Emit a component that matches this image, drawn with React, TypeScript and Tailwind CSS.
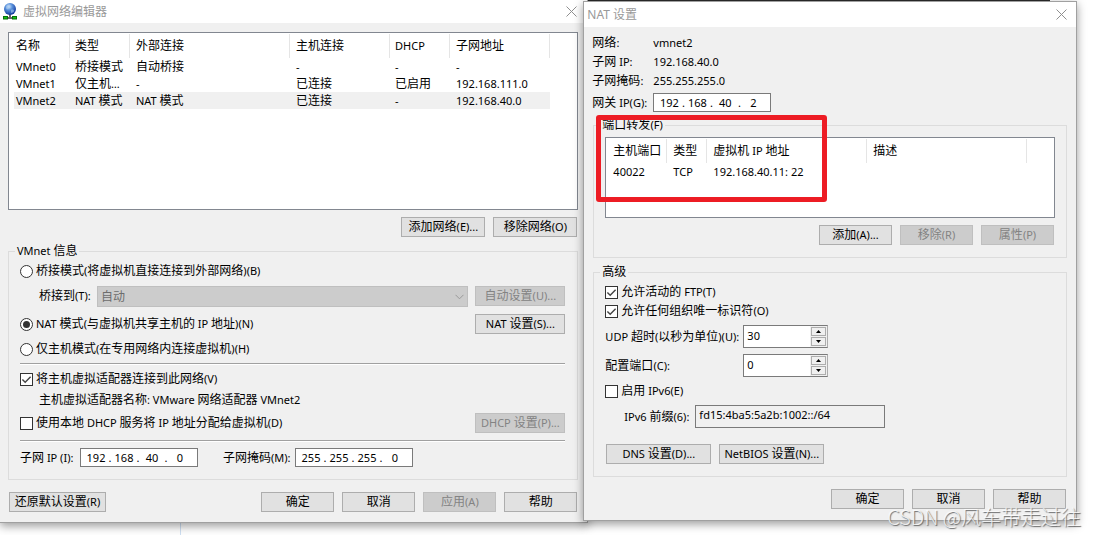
import type { ReactNode } from "react";
import { clsx } from "clsx";

// Latin runs are set one pixel smaller than the Chinese text around them
const Mixed = ({ text }: { text: string }) => (
  <>
    {text.split(/([\u4e00-\u9fff]+)/).map((part, i) =>
      i % 2 === 1 ? (
        part
      ) : (
        <span key={i} className="text-[11px]">
          {part}
        </span>
      )
    )}
  </>
);

const Button = ({ text, width, disabled }: { text: string; width: string; disabled?: boolean }) => (
  <button
    type="button"
    disabled={disabled}
    className={clsx(
      "h-5 shrink-0 border leading-4 text-center whitespace-nowrap",
      width,
      disabled ? "bg-[#cccccc] border-[#bfbfbf] text-[#838383]" : "bg-[#e1e1e1] border-[#adadad]"
    )}
  >
    <Mixed text={text} />
  </button>
);

const CloseButton = () => (
  <button type="button" aria-label="关闭" className="grid size-4 place-items-center">
    <svg width="11" height="11" viewBox="0 0 11 11" stroke="#8f8f8f" strokeWidth="1">
      <path d="M.5 .5l10 10M10.5 .5l-10 10" />
    </svg>
  </button>
);

const Check = ({ text, checked }: { text: string; checked?: boolean }) => (
  <label className="flex items-center gap-[3px] leading-4 whitespace-nowrap">
    <span className="grid">
      <input
        type="checkbox"
        defaultChecked={checked}
        className="peer col-start-1 row-start-1 size-[13px] appearance-none border border-[#333] bg-white"
      />
      <svg
        viewBox="0 0 13 13"
        className="pointer-events-none col-start-1 row-start-1 hidden size-[13px] peer-checked:block"
        fill="none"
        stroke="#444"
        strokeWidth="1.4"
      >
        <path d="M2.4 6.4l2.8 2.9 5.4-5.6" />
      </svg>
    </span>
    <span>
      <Mixed text={text} />
    </span>
  </label>
);

const Radio = ({ text, checked }: { text: string; checked?: boolean }) => (
  <label className="flex items-center gap-[3px] leading-4 whitespace-nowrap">
    <span className="grid">
      <input
        type="radio"
        name="vmnet-mode"
        defaultChecked={checked}
        className="peer col-start-1 row-start-1 size-[13px] appearance-none rounded-full border border-[#333] bg-white"
      />
      <span className="pointer-events-none col-start-1 row-start-1 hidden size-[7px] place-self-center rounded-full bg-[#333] peer-checked:block" />
    </span>
    <span>
      <Mixed text={text} />
    </span>
  </label>
);

const IpField = ({ label, parts }: { label: string; parts: string[] }) => (
  <div
    role="group"
    aria-label={label}
    className="flex h-[19px] w-[118px] items-center border border-[#7a7a7a] bg-white pl-[3px] text-[11px]"
  >
    {parts.map((part, i) => (
      <div key={i} className="flex items-center">
        {i > 0 && <span className="w-1 text-center leading-4">.</span>}
        <input
          type="text"
          aria-label={`${label} ${i + 1}`}
          defaultValue={part}
          className="h-4 w-6 bg-transparent text-center leading-4 outline-none"
        />
      </div>
    ))}
  </div>
);

const Spinner = ({ id, value }: { id: string; value: string }) => (
  <div className="flex h-[23px] w-[85px] border border-[#7a7a7a] border-r-[#adadad] bg-white">
    <input
      id={id}
      type="text"
      inputMode="numeric"
      defaultValue={value}
      className="h-[18px] min-w-0 flex-1 bg-transparent pl-[3px] text-[11px] leading-4 outline-none"
    />
    <div className="flex w-[17px] flex-col gap-px bg-[#f0f0f0] p-px">
      <button type="button" aria-label="增加" className="grid flex-1 place-items-center border border-[#adadad]">
        <svg width="5" height="3" viewBox="0 0 5 3">
          <path d="M0 3L2.5 0 5 3z" />
        </svg>
      </button>
      <button type="button" aria-label="减少" className="grid flex-1 place-items-center border border-[#adadad]">
        <svg width="5" height="3" viewBox="0 0 5 3">
          <path d="M0 0L2.5 3 5 0z" />
        </svg>
      </button>
    </div>
  </div>
);

const Group = ({ title, className, children }: { title: string; className?: string; children: ReactNode }) => (
  <fieldset className={clsx("min-w-0 border border-[#dcdcdc] px-[6px]", className)}>
    <legend className="h-[14px] px-[2px] leading-[14px]">
      <Mixed text={title} />
    </legend>
    {children}
  </fieldset>
);

const Divider = () => <hr className="h-[2px] border-t border-b border-t-[#a0a0a0] border-b-white" />;

type Column = { title: string; width: string };

const hostColumns: Column[] = [
  { title: "名称", width: "w-14 pl-[2px]" },
  { title: "类型", width: "w-[60px] pl-[5px]" },
  { title: "外部连接", width: "w-[160px] pl-[6px]" },
  { title: "主机连接", width: "w-[100px] pl-[6px]" },
  { title: "DHCP", width: "w-[60px] pl-[5px]" },
  { title: "子网地址", width: "w-[100px] pl-[6px]" },
];

const hostRows = [
  ["VMnet0", "桥接模式", "自动桥接", "-", "-", "-"],
  ["VMnet1", "仅主机…", "-", "已连接", "已启用", "192.168.111.0"],
  ["VMnet2", "NAT 模式", "NAT 模式", "已连接", "-", "192.168.40.0"],
];

const portColumns: Column[] = [
  { title: "主机端口", width: "w-14 pl-[2px]" },
  { title: "类型", width: "w-10 pl-[6px]" },
  { title: "虚拟机 IP 地址", width: "w-[160px] pl-[6px]" },
  { title: "描述", width: "w-[160px] pl-[6px]" },
];

const portRows = [["40022", "TCP", "192.168.40.11: 22", ""]];

const ListView = ({
  columns,
  rows,
  selected,
  height,
}: {
  columns: Column[];
  rows: string[][];
  selected?: number;
  height: string;
}) => (
  <div className={clsx("overflow-hidden border border-[#828790] bg-white pt-px pl-[5px]", height)}>
    <table className="table-fixed border-separate border-spacing-0 text-left whitespace-nowrap">
      <thead>
        <tr className="h-6">
          {columns.map((col) => (
            <th key={col.title} className={clsx("border-r border-[#e5e5e5] p-0 leading-4 font-normal", col.width)}>
              <Mixed text={col.title} />
            </th>
          ))}
        </tr>
      </thead>
      <tbody>
        {rows.map((row, r) => (
          <tr key={r} className={clsx("h-[17px]", r === selected && "bg-[#f0f0f0]")}>
            {row.map((cell, c) => (
              <td key={c} className={clsx("p-0 leading-4", columns[c].width)}>
                <Mixed text={cell} />
              </td>
            ))}
          </tr>
        ))}
      </tbody>
    </table>
  </div>
);

const NetworkIcon = () => (
  <svg width="15" height="17" viewBox="0 0 15 17">
    <defs>
      <radialGradient id="globe" cx="0.4" cy="0.3" r="0.7">
        <stop offset="0" stopColor="#d4e6fb" />
        <stop offset="0.4" stopColor="#5b93dc" />
        <stop offset="1" stopColor="#12389c" />
      </radialGradient>
    </defs>
    <rect x="0.5" y="13.5" width="4" height="2.5" fill="#12c212" stroke="#0a6d0a" />
    <rect x="9.5" y="13.5" width="4" height="2.5" fill="#12c212" stroke="#0a6d0a" />
    <path d="M7 11v3M5 15h4" stroke="#666" strokeWidth="2" />
    <circle cx="7" cy="6" r="6" fill="url(#globe)" />
    <path d="M3 4c1-2 3-2 4-1s-1 2-2 3-2 0-2-2zM8 7c2-1 3 0 3 1s-2 2-3 2z" fill="#a9c9ef" opacity=".6" />
  </svg>
);

const EditorWindow = () => (
  <section className="min-w-0 flex-[589_1_0%] border-r border-b border-[#a0a0a0] bg-[#f0f0f0] shadow-[0_3px_9px_rgba(0,0,0,0.4)]">
    <header className="flex h-[23px] items-center bg-white pr-2 pl-[3px]">
      <NetworkIcon />
      <h1 className="ml-[5px] flex-1 leading-4 text-[#999]">虚拟网络编辑器</h1>
      <CloseButton />
    </header>

    <div className="pt-[9px] pr-[9px] pb-[10px] pl-2">
      <ListView columns={hostColumns} rows={hostRows} selected={2} height="h-[178px]" />
      <div className="mt-[7px] flex justify-end gap-2 pr-px">
        <Button text="添加网络(E)..." width="w-[84px]" />
        <Button text="移除网络(O)" width="w-[84px]" />
      </div>

      <Group title="VMnet 信息" className="mt-[7px]">
        <div className="pt-[3px] pr-[6px] pb-3 pl-[5px]">
          <div className="flex h-5 items-center">
            <Radio text="桥接模式(将虚拟机直接连接到外部网络)(B)" />
          </div>
          <div className="mt-[5px] flex h-[21px] items-start pl-[19px]">
            <label htmlFor="bridge" className="w-[58px] leading-5 whitespace-nowrap">
              <Mixed text="桥接到(T):" />
            </label>
            <div className="grid flex-1">
              <select
                id="bridge"
                disabled
                className="col-start-1 row-start-1 h-[21px] w-full appearance-none border border-[#bfbfbf] bg-[#cccccc] pl-[3px] leading-4 text-[#6d6d6d] opacity-100"
              >
                <option>自动</option>
              </select>
              <svg
                width="9"
                height="6"
                viewBox="0 0 9 6"
                className="pointer-events-none col-start-1 row-start-1 mr-1 self-center justify-self-end"
                fill="none"
                stroke="#999"
              >
                <path d="M.5 .8l4 4 4-4" />
              </svg>
            </div>
            <div className="ml-[7px]">
              <Button text="自动设置(U)..." width="w-[90px]" disabled />
            </div>
          </div>
          <div className="mt-[7px] flex h-5 items-center justify-between">
            <Radio text="NAT 模式(与虚拟机共享主机的 IP 地址)(N)" checked />
            <Button text="NAT 设置(S)..." width="w-[90px]" />
          </div>
          <div className="mt-[5px] mb-1 flex h-5 items-center">
            <Radio text="仅主机模式(在专用网络内连接虚拟机)(H)" />
          </div>
          <Divider />
          <div className="mt-[6px]">
            <Check text="将主机虚拟适配器连接到此网络(V)" checked />
          </div>
          <p className="mt-[5px] pl-[19px] leading-4">
            <Mixed text="主机虚拟适配器名称: VMware 网络适配器 VMnet2" />
          </p>
          <div className="mt-[5px] mb-[7px] flex items-center justify-between">
            <Check text="使用本地 DHCP 服务将 IP 地址分配给虚拟机(D)" />
            <Button text="DHCP 设置(P)..." width="w-[90px]" disabled />
          </div>
          <Divider />
          <div className="mt-[6px] flex items-center">
            <span className="w-[60px] leading-4 whitespace-nowrap">
              <Mixed text="子网 IP (I):" />
            </span>
            <IpField label="子网 IP" parts={["192", "168", "40", "0"]} />
            <span className="ml-[25px] w-[72px] leading-4 whitespace-nowrap">
              <Mixed text="子网掩码(M):" />
            </span>
            <IpField label="子网掩码" parts={["255", "255", "255", "0"]} />
          </div>
        </div>
      </Group>

      <footer className="mt-3 flex gap-2 pr-px pl-px">
        <div className="flex-1">
          <Button text="还原默认设置(R)" width="w-[97px]" />
        </div>
        <Button text="确定" width="w-[73px]" />
        <Button text="取消" width="w-[73px]" />
        <Button text="应用(A)" width="w-[73px]" disabled />
        <Button text="帮助" width="w-[73px]" />
      </footer>
    </div>
  </section>
);

const Fact = ({ label, value }: { label: string; value: string }) => (
  <div className="flex h-[19px] items-center leading-4">
    <dt className="w-[61px] whitespace-nowrap">
      <Mixed text={label} />
    </dt>
    <dd>
      <Mixed text={value} />
    </dd>
  </div>
);

const NatWindow = () => (
  <section className="relative mt-px -ml-[5px] min-w-0 flex-[493_1_0%] self-start border border-[#a0a0a0] bg-[#f0f0f0] shadow-[0_3px_9px_rgba(0,0,0,0.4)]">
    <header className="flex h-[25px] items-center bg-white pr-[7px] pl-[3px]">
      <h2 className="flex-1 leading-4 text-[#999]">NAT 设置</h2>
      <CloseButton />
    </header>

    <div className="pt-[6px] pr-[9px] pb-[11px] pl-2">
      <dl>
        <Fact label="网络:" value="vmnet2" />
        <Fact label="子网 IP:" value="192.168.40.0" />
        <Fact label="子网掩码:" value="255.255.255.0" />
      </dl>
      <div className="mt-[3px] flex items-center">
        <span className="w-[61px] leading-4 whitespace-nowrap">
          <Mixed text="网关 IP(G):" />
        </span>
        <IpField label="网关 IP" parts={["192", "168", "40", "2"]} />
      </div>

      <div className="relative mt-[6px] pl-px">
        <Group title="端口转发(F)">
          <div className="pt-[5px] pr-[5px] pb-3 pl-[5px]">
            <ListView columns={portColumns} rows={portRows} height="h-[81px]" />
            <div className="mt-[7px] flex justify-end gap-2 pr-px">
              <Button text="添加(A)..." width="w-[73px]" />
              <Button text="移除(R)" width="w-[73px]" disabled />
              <Button text="属性(P)" width="w-[73px]" disabled />
            </div>
          </div>
        </Group>
        {/* marker around the forwarded port */}
        <div className="pointer-events-none absolute -top-[3px] left-1 h-[87px] w-[231px] rounded-[3px] border-[5px] border-[#ed1c24]" />
      </div>

      <div className="mt-[7px] pl-px">
        <Group title="高级">
          <div className="pt-[5px] pb-3 pl-[5px]">
            <Check text="允许活动的 FTP(T)" checked />
            <div className="mt-[3px]">
              <Check text="允许任何组织唯一标识符(O)" checked />
            </div>
            <div className="mt-[6px] flex items-center">
              <label htmlFor="udp" className="w-[138px] leading-4 whitespace-nowrap">
                <Mixed text="UDP 超时(以秒为单位)(U):" />
              </label>
              <Spinner id="udp" value="30" />
            </div>
            <div className="mt-[6px] flex items-center">
              <label htmlFor="port" className="w-[138px] leading-4 whitespace-nowrap">
                <Mixed text="配置端口(C):" />
              </label>
              <Spinner id="port" value="0" />
            </div>
            <div className="mt-[6px]">
              <Check text="启用 IPv6(E)" />
            </div>
            <div className="mt-[6px] flex items-center pl-[19px]">
              <label htmlFor="prefix" className="w-[71px] leading-4 whitespace-nowrap">
                <Mixed text="IPv6 前缀(6):" />
              </label>
              <input
                id="prefix"
                type="text"
                readOnly
                defaultValue="fd15:4ba5:5a2b:1002::/64"
                className="h-[23px] w-[190px] border border-[#7a7a7a] bg-[#f0f0f0] pb-1 pl-[3px] text-[11px] leading-4 outline-none"
              />
            </div>
            <div className="mt-4 flex gap-2 pl-px">
              <Button text="DNS 设置(D)..." width="w-[105px]" />
              <Button text="NetBIOS 设置(N)..." width="w-[105px]" />
            </div>
          </div>
        </Group>
      </div>

      <footer className="mt-3 flex justify-end gap-2 pr-px">
        <Button text="确定" width="w-[73px]" />
        <Button text="取消" width="w-[73px]" />
        <Button text="帮助" width="w-[73px]" />
      </footer>
    </div>
  </section>
);

export default function App() {
  return (
    <main className="relative min-h-screen overflow-hidden bg-white font-['Noto_Sans','Noto_Sans_CJK_SC',sans-serif] text-xs text-black">
      <div className="absolute top-0 right-[47px] left-[53.5%] h-[2px] bg-[#2b2b2b]" />
      <div className="absolute top-0 bottom-0 left-[180px] w-px bg-[#cfe0f3]" />
      <div className="relative flex items-start pr-5">
        <EditorWindow />
        <NatWindow />
      </div>
      <p className="absolute right-4 bottom-[6px] font-['Noto_Sans_CJK_SC',sans-serif] text-xl leading-6 font-light text-white/80 [text-shadow:1px_1px_1px_#666]">
        CSDN @风车带走过往
      </p>
    </main>
  );
}
